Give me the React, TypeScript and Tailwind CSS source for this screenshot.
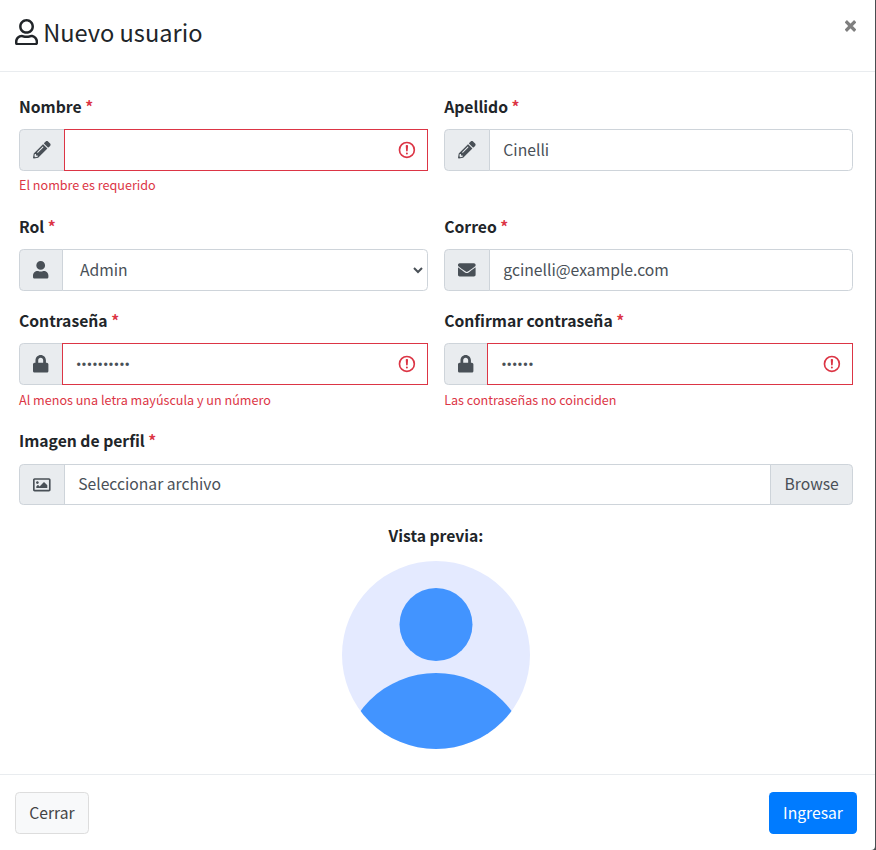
import type { ReactNode } from "react";
import { FaEnvelope, FaLock, FaPencilAlt, FaRegImage, FaRegUser, FaUser } from "react-icons/fa";

function Label({ children }: { children: ReactNode }) {
  return (
    <label className="mb-[9.4px] block text-[15.7px] leading-[25.6px] font-bold text-[#212529]">
      {children} <span className="text-[#dc3545]">*</span>
    </label>
  );
}

function Addon({ children }: { children: ReactNode }) {
  return (
    <span className="-mr-px flex shrink-0 items-center rounded-l-[4.4px] border border-[#ced4da] bg-[#e9ecef] px-[13.2px] text-[17.6px] text-[#495057]">
      {children}
    </span>
  );
}

function ErrorMark() {
  return (
    <svg
      viewBox="0 0 12 12"
      className="pointer-events-none absolute top-[11px] right-[11px] size-[19.8px]"
      fill="none"
      stroke="#dc3545"
    >
      <circle cx="6" cy="6" r="4.5" />
      <path strokeLinejoin="round" d="M5.8 3.6h.4L6 6.5z" />
      <circle cx="6" cy="8.2" r=".6" fill="#dc3545" stroke="none" />
    </svg>
  );
}

type FieldProps = {
  label: string;
  icon: ReactNode;
  value: string;
  secret?: boolean;
  error?: string;
};

function Field({ label, icon, value, secret, error }: FieldProps) {
  return (
    <div className="min-w-0">
      <Label>{label}</Label>
      <div className="relative flex h-[42px]">
        <Addon>{icon}</Addon>
        <div
          className={
            error
              ? "z-10 flex min-w-0 flex-1 items-center border border-[#dc3545] bg-white px-[13.2px]"
              : "z-10 flex min-w-0 flex-1 items-center rounded-r-[4.4px] border border-[#ced4da] bg-white px-[13.2px]"
          }
        >
          <span
            className={
              secret
                ? "pt-[2px] font-['Roboto',sans-serif] text-[16px] text-[#495057]"
                : "pb-[0.5px] text-[15.7px] leading-[26.4px] text-[#495057]"
            }
          >
            {value}
          </span>
          {error && <ErrorMark />}
        </div>
      </div>
      {error && <p className="mt-[3.3px] text-[12.6px] leading-[21.1px] text-[#dc3545]">{error}</p>}
    </div>
  );
}

export default function App() {
  return (
    <div className="flex h-[850px] w-[876px] flex-col overflow-hidden bg-[#4a4e51] font-['Noto_Sans_CJK_SC',sans-serif] text-[#212529]">
      <div className="flex w-[875px] flex-1 flex-col rounded-br-[4px] bg-white">
        <header className="flex h-[72px] items-start justify-between border-b border-[#e9ecef] pt-[13px] pr-[19px] pl-[14.6px]">
          <h4 className="flex items-center text-[23.6px] leading-[39px]">
            <FaRegUser className="mr-[5.5px] -mt-[1px] h-[26.4px] w-[23.1px]" />
            Nuevo usuario
          </h4>
          <button className="mt-[7px]" aria-label="Cerrar">
            <svg viewBox="0 0 11 12" className="h-[12px] w-[11px]" stroke="#7f7f7f" strokeWidth="3.2">
              <path d="M.8 1.2l9.4 9.6M10.2 1.2L.8 10.8" />
            </svg>
          </button>
        </header>

        <main className="flex-1 px-[19px] pt-[22px]">
          <div className="grid w-[834px] grid-cols-2 grid-rows-[120px_94.3px_119.7px] gap-x-[16.4px]">
            <Field label="Nombre" icon={<FaPencilAlt />} value="" error="El nombre es requerido" />
            <Field label="Apellido" icon={<FaPencilAlt />} value="Cinelli" />
            <div>
              <Label>Rol</Label>
              <div className="flex h-[42px]">
                <Addon>
                  <FaUser className="w-[15.4px]" />
                </Addon>
                <div className="flex flex-1 items-center justify-between rounded-r-[4.4px] border border-[#ced4da] bg-white pr-[3px] pb-[0.5px] pl-[17.2px] text-[15.7px] text-[#495057]">
                  Admin
                  <svg viewBox="0 0 12 12" className="size-[12px]" fill="none" stroke="#495057" strokeWidth="2">
                    <path d="M2 4l4 4 4-4" />
                  </svg>
                </div>
              </div>
            </div>
            <Field label="Correo" icon={<FaEnvelope />} value="gcinelli@example.com" />
            <Field
              label="Contraseña"
              icon={<FaLock className="w-[15.4px]" />}
              value="••••••••••"
              secret
              error="Al menos una letra mayúscula y un número"
            />
            <Field
              label="Confirmar contraseña"
              icon={<FaLock className="w-[15.4px]" />}
              value="••••••"
              secret
              error="Las contraseñas no coinciden"
            />
          </div>

          <div className="w-[834px]">
            <Label>Imagen de perfil</Label>
            <div className="mt-[10.4px] flex h-[41px] text-[15.7px] text-[#495057]">
              <Addon>
                <FaRegImage />
              </Addon>
              <div className="flex flex-1 items-center border border-[#ced4da] bg-white pb-px pl-[13.2px]">
                Seleccionar archivo
              </div>
              <button className="-ml-px rounded-r-[4.4px] border border-[#ced4da] bg-[#e9ecef] px-[13.2px] pb-px">
                Browse
              </button>
            </div>
          </div>

          <div className="mt-[17.8px] flex w-[834px] flex-col items-center">
            <p className="text-[15.7px] leading-[26.4px] font-bold">Vista previa:</p>
            <svg viewBox="0 0 188 188" className="mt-[11.8px] size-[188px]">
              <defs>
                <clipPath id="avatar">
                  <circle cx="94" cy="94" r="94" />
                </clipPath>
              </defs>
              <g clipPath="url(#avatar)">
                <rect width="188" height="188" fill="#e4eaff" />
                <circle cx="94" cy="63.5" r="36.5" fill="#4294ff" />
                <circle cx="94" cy="206" r="94" fill="#4294ff" />
              </g>
            </svg>
          </div>
        </main>

        <footer className="flex h-[76px] items-start justify-between border-t border-[#e9ecef] pt-[17px] pr-[18px] pl-[15px] text-[15.7px]">
          <button className="h-[42px] w-[74px] rounded-[4.4px] border border-[#ddd] bg-[#f8f9fa] text-[#444]">
            Cerrar
          </button>
          <button className="h-[42px] w-[88px] rounded-[4.4px] bg-[#007bff] text-white">Ingresar</button>
        </footer>
      </div>
    </div>
  );
}
